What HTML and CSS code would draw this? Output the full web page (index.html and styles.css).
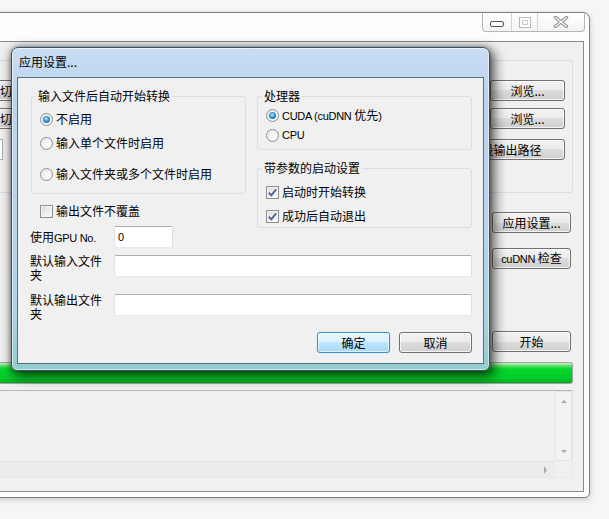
FILE: index.html
```html
<!DOCTYPE html>
<html lang="zh-CN">
<head>
<meta charset="utf-8">
<title>应用设置</title>
<link rel="stylesheet" href="styles.css">
</head>
<body>
<div class="desk">
  <div class="mainwin">
    <div class="mcaption">
      <div class="capbtns">
        <span class="capbtn cap-min"><svg width="14" height="6" viewBox="0 0 14 6"><rect x="0.5" y="0.5" width="13" height="5" rx="1.5" fill="#fff" stroke="#555"/></svg></span>
        <span class="capbtn cap-max"><svg width="12" height="11" viewBox="0 0 12 11"><rect x="0.5" y="0.5" width="11" height="10" fill="#fff" stroke="#b8b8b8"/><rect x="3.5" y="3.5" width="5" height="4" fill="none" stroke="#c8c8c8"/></svg></span>
        <span class="capbtn cap-close"><svg width="16" height="12" viewBox="0 0 16 12"><path d="M2.5 1.5 L13.5 10.5 M13.5 1.5 L2.5 10.5" stroke="#8a8a8a" stroke-width="3.4" stroke-linecap="round"/><path d="M2.5 1.5 L13.5 10.5 M13.5 1.5 L2.5 10.5" stroke="#fafafa" stroke-width="1.4" stroke-linecap="round"/></svg></span>
      </div>
    </div>
    <div class="mclient">
      <div class="mgroup">
        <div class="mrow"><span class="btn mlead">切换</span><span class="btn mb">浏览...</span></div>
        <div class="mrow r2"><span class="btn mlead">切换</span><span class="btn mb">浏览...</span></div>
        <div class="mrow r3"><span class="mfield"></span><span class="btn mb wide">设输出路径</span></div>
      </div>
      <div class="side">
        <span class="btn sb sb1">应用设置...</span>
        <span class="btn sb sb2"><span><span class="lat">cuDNN</span> 检查</span></span>
        <span class="btn sb sb3">开始</span>
      </div>
      <div class="progress"></div>
      <div class="log">
        <div class="log-area"></div>
        <div class="vscroll"><span class="arr-up"></span><span class="arr-down"></span></div>
        <div class="hscroll"><span class="arr-right"></span></div>
        <div class="corner"></div>
      </div>
    </div>
  </div>

  <div class="dialog">
    <div class="dlg-title">应用设置...</div>
    <div class="dlg-client">
      <div class="dtop">
        <div class="lcol">
          <div class="grp g1">
            <span class="grp-title">输入文件后自动开始转换</span>
            <label class="opt"><span class="radio on"></span><span>不启用</span></label>
            <label class="opt o2"><span class="radio"></span><span>输入单个文件时启用</span></label>
            <label class="opt o3"><span class="radio"></span><span>输入文件夹或多个文件时启用</span></label>
          </div>
          <label class="opt cbrow"><span class="check"></span><span>输出文件不覆盖</span></label>
          <div class="gpu-row">
            <span class="flabel">使用<span class="lat">GPU No.</span></span>
            <span class="inp small"><span class="lat">0</span></span>
          </div>
        </div>
        <div class="rcol">
          <div class="grp g2">
            <span class="grp-title">处理器</span>
            <label class="opt"><span class="radio on"></span><span><span class="lat">CUDA (cuDNN</span> 优先<span class="lat">)</span></span></label>
            <label class="opt p2"><span class="radio"></span><span class="lat">CPU</span></label>
          </div>
          <div class="grp g3">
            <span class="grp-title">带参数的启动设置</span>
            <label class="opt"><span class="check"><svg width="11" height="11" viewBox="0 0 11 11"><path d="M1.8 5.6 L4.3 8.3 L9.2 2.2" fill="none" stroke="#4a5d8e" stroke-width="1.8"/></svg></span><span>启动时开始转换</span></label>
            <label class="opt q2"><span class="check"><svg width="11" height="11" viewBox="0 0 11 11"><path d="M1.8 5.6 L4.3 8.3 L9.2 2.2" fill="none" stroke="#4a5d8e" stroke-width="1.8"/></svg></span><span>成功后自动退出</span></label>
          </div>
        </div>
      </div>
      <div class="frow">
        <span class="flabel">默认输入文件夹</span>
        <span class="inp wide"></span>
      </div>
      <div class="frow f2">
        <span class="flabel">默认输出文件夹</span>
        <span class="inp wide"></span>
      </div>
      <div class="dbtns">
        <span class="btn dbtn default">确定</span>
        <span class="btn dbtn">取消</span>
      </div>
    </div>
  </div>
</div>
</body>
</html>
```

FILE: styles.css
```css
* { box-sizing: border-box; }
html, body { margin: 0; padding: 0; }
body {
  font-family: "Noto Sans CJK SC", "Liberation Sans", sans-serif;
  font-size: 12px;
  line-height: 14px;
  color: #000;
}
.lat {
  font-family: "Liberation Sans", "Noto Sans CJK SC", sans-serif;
  font-size: 11px;
  letter-spacing: -0.3px;
}
.desk {
  position: relative;
  width: 609px;
  height: 519px;
  overflow: hidden;
  background: #f6f6f6;
}

/* ---------- background main window ---------- */
.mainwin {
  position: absolute;
  left: -40px;
  top: 12px;
  width: 630px;
  height: 486px;
  border: 1px solid #7c7c7c;
  border-radius: 0 7px 5px 0;
  background: #fdfdfd;
  padding: 0 5px 5px 0;
  display: flex;
  flex-direction: column;
  box-shadow: 0 2px 6px rgba(0, 0, 0, .18);
}
.mcaption {
  height: 28px;
  display: flex;
  justify-content: flex-end;
  margin-right: -1px;
}
.capbtns {
  display: flex;
  height: 19px;
  border: 1px solid #b4b4b4;
  border-top: 0;
  border-radius: 0 0 4px 4px;
  background: linear-gradient(#ffffff, #f4f4f4);
}
.capbtn {
  display: flex;
  align-items: center;
  justify-content: center;
}
.cap-min { width: 28px; padding-top: 3px; }
.cap-max { width: 27px; border-left: 1px solid #d4d4d4; border-right: 1px solid #d4d4d4; }
.cap-close { width: 46px; }

.mclient {
  flex: 1;
  border: 1px solid #8a8a8a;
  background: #f0f0f0;
  display: flex;
  flex-direction: column;
}
.mgroup {
  margin: 18px 10px 0 0;
  height: 133px;
  border: 1px solid #d5dfe5;
  border-radius: 3px;
  padding: 19px 7px 0 0;
  display: flex;
  flex-direction: column;
}
.mrow {
  display: flex;
  justify-content: space-between;
  height: 21px;
}
.mrow.r2 { margin-top: 7px; }
.mrow.r3 { margin-top: 10px; }

.btn {
  display: flex;
  align-items: center;
  justify-content: center;
  height: 21px;
  border: 1px solid #707070;
  border-radius: 3px;
  background: linear-gradient(#f2f2f2 0%, #ebebeb 50%, #dddddd 50%, #cfcfcf 100%);
  box-shadow: inset 0 0 0 1px rgba(255, 255, 255, .75);
  white-space: nowrap;
}
.mlead {
  width: 200px;
  justify-content: flex-start;
  padding-left: 36px;
}
.mfield {
  width: 40px;
  height: 21px;
  background: #fff;
  border: 1px solid #abadb3;
}
.mb { width: 75px; }
.mb.wide { width: 107px; }

.side {
  display: flex;
  flex-direction: column;
  align-items: flex-end;
  margin-right: 12px;
}
.sb { width: 79px; }
.sb1 { margin-top: 19px; }
.sb2 { margin-top: 15px; }
.sb3 { margin-top: 62px; }

.progress {
  margin: 10px 10px 0 0;
  height: 22px;
  border: 1px solid #a2a2a2;
  border-left: 0;
  border-radius: 0 3px 3px 0;
  background: linear-gradient(#c9f5c9 0%, #5fe06a 14%, #06d62c 30%, #00cf2a 65%, #00c426 85%, #05a520 100%);
}
.log {
  margin: 6px 10px 0 0;
  height: 88px;
  border: 1px solid;
  border-color: #b5b7bd #e3e9ef #e3e9ef #e2e3ea;
  display: grid;
  grid-template-columns: 1fr 17px;
  grid-template-rows: 1fr 16px;
  background: #f0f0f0;
}
.vscroll {
  border: 1px solid #e4e4e4;
  border-radius: 2px;
  background: #f3f3f3;
  display: flex;
  flex-direction: column;
  justify-content: space-between;
  align-items: center;
  padding: 8px 0 7px;
}
.hscroll {
  border-top: 1px solid #e4e4e4;
  background: #ececec;
  display: flex;
  justify-content: flex-end;
  align-items: center;
  padding-right: 8px;
}
.corner { background: #f0f0f0; }
.arr-up {
  width: 0; height: 0;
  border-left: 3px solid transparent;
  border-right: 3px solid transparent;
  border-bottom: 3px solid #a8a8a8;
}
.arr-down {
  width: 0; height: 0;
  border-left: 3px solid transparent;
  border-right: 3px solid transparent;
  border-top: 3px solid #a8a8a8;
}
.arr-right {
  width: 0; height: 0;
  border-top: 4px solid transparent;
  border-bottom: 4px solid transparent;
  border-left: 3px solid #a8a8a8;
}

/* ---------- dialog ---------- */
.dialog {
  position: absolute;
  left: 11px;
  top: 47px;
  width: 479px;
  height: 324px;
  border: 1px solid #3d4f5c;
  border-radius: 7px 7px 6px 6px;
  background: linear-gradient(180deg, #c9def3 0%, #bcd5ef 12%, #b8d3ee 55%, #acd3e6 82%, #94cccf 100%);
  padding: 0 5px 6px 5px;
  display: flex;
  flex-direction: column;
  box-shadow: inset 0 0 0 1px rgba(255, 255, 255, .55), 3px 4px 12px 2px rgba(0, 0, 0, .6), 0 0 5px rgba(0, 0, 0, .35);
}
.dlg-title {
  height: 29px;
  display: flex;
  align-items: center;
  padding: 0 0 1px 2px;
}
.dlg-client {
  flex: 1;
  border: 1px solid #56707f;
  background: #f0f0f0;
  padding: 18px 11px 0 12px;
}
.dtop {
  display: grid;
  grid-template-columns: 216px 215px;
  column-gap: 11px;
  align-items: start;
}
.grp {
  position: relative;
  border: 1px solid #d5dfe5;
  border-radius: 3px;
  display: flex;
  flex-direction: column;
  align-items: flex-start;
}
.grp-title {
  position: absolute;
  top: -8px;
  left: 4px;
  padding: 0 2px;
  background: #f0f0f0;
  white-space: nowrap;
}
.g1 { margin-left: 1px; height: 98px; padding: 14px 0 0 8px; }
.g1 .o2 { margin-top: 8px; }
.g1 .o3 { margin-top: 15px; }
.g2 { height: 54px; padding: 10px 0 0 8px; }
.g2 .p2 { margin-top: 4px; }
.g3 { margin-top: 18px; height: 60px; padding: 15px 0 0 8px; }
.g3 .q2 { margin-top: 8px; }

.opt {
  display: flex;
  align-items: center;
  height: 16px;
  white-space: nowrap;
}
.radio {
  flex: none;
  width: 13px;
  height: 13px;
  margin-right: 3px;
  border-radius: 50%;
  border: 1px solid #8e8f8f;
  background: radial-gradient(circle at 65% 65%, #ffffff 0%, #f2f2f2 45%, #d2d2d2 100%);
  box-shadow: inset 0 0 0 1px #f4f4f4;
  display: flex;
  align-items: center;
  justify-content: center;
}
.radio.on::after {
  content: "";
  width: 7px;
  height: 7px;
  border-radius: 50%;
  background: radial-gradient(circle at 45% 40%, #c4ecff 0%, #48a8e2 35%, #115e9c 80%, #0b4677 100%);
}
.check {
  flex: none;
  width: 13px;
  height: 13px;
  margin-right: 3px;
  border: 1px solid #8e8f8f;
  background: linear-gradient(135deg, #d6d6d6 0%, #ececec 50%, #fbfbfb 100%);
  box-shadow: inset 0 0 0 1px #f5f5f5;
  display: flex;
  align-items: center;
  justify-content: center;
}
.cbrow { margin: 9px 0 0 10px; }
.gpu-row {
  display: flex;
  align-items: center;
  margin-top: 7px;
  height: 22px;
}
.flabel {
  flex: none;
  width: 84px;
  padding-right: 6px;
}
.inp {
  display: flex;
  align-items: flex-start;
  height: 22px;
  background: #fff;
  border: 1px solid;
  border-color: #abadb3 #dbdfe6 #e3e9ef #e2e3ea;
  border-radius: 2px;
  padding: 3px 0 0 3px;
}
.inp.small { width: 59px; }
.inp.wide { width: 358px; }
.frow {
  display: flex;
  align-items: flex-start;
  height: 22px;
  margin-top: 7px;
}
.frow .flabel { margin-top: -1px; }
.frow.f2 { margin-top: 17px; }
.dbtns {
  display: flex;
  justify-content: flex-end;
  gap: 9px;
  margin-top: 16px;
}
.dbtn { width: 73px; }
.dbtn.default {
  border-color: #3c8fc8;
  background: linear-gradient(#eaf6fd 0%, #d9f0fc 50%, #bee6fd 50%, #a7d9f5 100%);
  box-shadow: inset 0 0 0 1px rgba(255, 255, 255, .6), 0 0 1px #6cc4ee;
}
```
